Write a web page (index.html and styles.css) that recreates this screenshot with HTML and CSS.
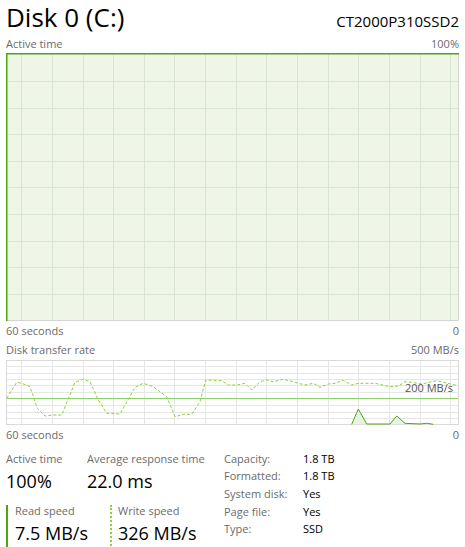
FILE: index.html
```html
<!DOCTYPE html>
<html lang="en">
<head>
    <meta charset="UTF-8">
    <title>Disk 0 (C:)</title>
    <link rel="stylesheet" href="styles.css">
</head>
<body>

<div class="panel">
    <div class="head">
        <h1 class="title">Disk 0 (C:)</h1>
        <div class="model">CT2000P310SSD2</div>
    </div>

    <div class="axis axis-top"><span>Active time</span><span>100%</span></div>
    <!--活动时间图-->
    <svg class="graph" width="453" height="268" viewBox="0 0 453 268">
        <rect x="0" y="0" width="453" height="268" fill="#eff6e8"/>
        <path stroke="#d9e4d1" stroke-width="1" fill="none"
              d="M15.5 0V268M46.5 0V268M77.5 0V268M107.5 0V268M138.5 0V268M168.5 0V268M199.5 0V268M230.5 0V268M260.5 0V268M291.5 0V268M322.5 0V268M352.5 0V268M383.5 0V268M414.5 0V268M444.5 0V268
                 M0 28.5H453M0 55.5H453M0 81.5H453M0 108.5H453M0 134.5H453M0 161.5H453M0 188.5H453M0 214.5H453M0 241.5H453"/>
        <path stroke="#d4d4d4" stroke-width="1" fill="none" d="M452.5 0V267.5H0"/>
        <path stroke="#4da60c" stroke-width="1.5" fill="none" d="M0.75 268V0.75H453"/>
    </svg>
    <div class="axis"><span>60 seconds</span><span>0</span></div>

    <div class="axis axis-tall"><span>Disk transfer rate</span><span>500 MB/s</span></div>
    <!--传输速率图-->
    <div class="rate">
        <svg class="graph" width="453" height="65" viewBox="0 0 453 65">
            <rect x="0.5" y="0.5" width="452" height="64" fill="#fff" stroke="#dadada"/>
            <path stroke="#e6e6e6" stroke-width="1" fill="none"
                  d="M15.5 1V64M46.5 1V64M77.5 1V64M107.5 1V64M138.5 1V64M168.5 1V64M199.5 1V64M230.5 1V64M260.5 1V64M291.5 1V64M322.5 1V64M352.5 1V64M383.5 1V64M414.5 1V64M444.5 1V64
                     M1 6.5H452M1 13.5H452M1 19.5H452M1 25.5H452M1 32.5H452M1 45.5H452M1 52.5H452M1 58.5H452"/>
            <path stroke="#8fd06e" stroke-width="1" d="M1 38.5H452"/>
            <polygon fill="#e9f3e2" points="345.7,64.3 352.3,49 360.7,64 384,64 390.7,56 399,63.3 414,64 420.7,63.3 427.3,64.3"/>
            <polyline fill="none" stroke="#4da60c" stroke-width="1"
                      points="345.7,64.3 352.3,49 360.7,64 384,64 390.7,56 399,63.3 414,64 420.7,63.3 427.3,64.3"/>
            <polyline fill="none" stroke="#8ed13a" stroke-width="1" stroke-dasharray="3 2"
                      points="0.7,38.3 10.7,22.3 15.7,23.3 24,26.7 31.3,48.3 39,56 47.3,55 55.7,55 69,22.3 77.3,19.3 84,21.7 92.3,40 100.7,53.3 114,54 129,27.3 137.3,23.3 147.3,26.7 160.7,36.7 169,56.7 177.3,54.3 185.7,54.3 194,41.7 199.7,20 215.7,20.7 222.3,25 230.7,25 239,23.3 245.7,30 254,21.7 260.7,20 267.3,21.7 277.3,19.3 284,20.7 292.3,23.3 299,25 307.3,23.3 314,27.3 322.3,24 329,23.3 337.3,20.3 345.7,25 352.3,23.3 369,23.3 384,26.7 392.3,26 399,21.7 405.7,22.3 415.7,24 430.7,20.7 437.3,22.3 452,25.7"/>
        </svg>
        <span class="rate-mark">200 MB/s</span>
    </div>
    <div class="axis"><span>60 seconds</span><span>0</span></div>

    <div class="stats">
        <div class="stats-main">
            <div class="stat-row">
                <div class="stat stat-active">
                    <div class="stat-label">Active time</div>
                    <div class="stat-value">100%</div>
                </div>
                <div class="stat">
                    <div class="stat-label">Average response time</div>
                    <div class="stat-value">22.0 ms</div>
                </div>
            </div>
            <div class="stat-row">
                <div class="speed speed-read">
                    <div class="stat-label">Read speed</div>
                    <div class="speed-value">7.5 MB/s</div>
                </div>
                <div class="speed speed-write">
                    <div class="stat-label">Write speed</div>
                    <div class="speed-value">326 MB/s</div>
                </div>
            </div>
        </div>
        <dl class="info">
            <dt>Capacity:</dt><dd>1.8 TB</dd>
            <dt>Formatted:</dt><dd>1.8 TB</dd>
            <dt>System disk:</dt><dd>Yes</dd>
            <dt>Page file:</dt><dd>Yes</dd>
            <dt>Type:</dt><dd>SSD</dd>
        </dl>
    </div>
</div>

</body>
</html>
```

FILE: styles.css
```css
html,body{
    height: 100%;
}
body{
    margin: 0;
    background: #fff;
    color: #000;
    font-family: "Open Sans", "Noto Sans", sans-serif;
    overflow: hidden;
}

.panel{
    width: 465px;
    padding: 0 6px;
    box-sizing: border-box;
}

.head{
    display: flex;
    justify-content: space-between;
    align-items: baseline;
    height: 34px;
}

.title{
    margin: 0;
    font-size: 26px;
    line-height: 34px;
    font-weight: 400;
}

.model{
    font-size: 15px;
}

.axis{
    display: flex;
    justify-content: space-between;
    font-size: 11px;
    line-height: 19px;
    color: #6b6b6b;
}

.axis-tall{
    line-height: 20px;
}

.graph{
    display: block;
}

.rate{
    position: relative;
    height: 65px;
}

.rate-mark{
    position: absolute;
    right: 6px;
    top: 21px;
    font-size: 11px;
    line-height: 14px;
    color: #555;
}

.stats{
    display: flex;
    align-items: flex-start;
    padding-top: 5.5px;
}

.stats-main{
    width: 218px;
}

.stat-row{
    display: flex;
}

.stat-active{
    width: 81px;
}

.stat-label{
    font-size: 11px;
    line-height: 17.8px;
    color: #6b6b6b;
    white-space: nowrap;
}

.stat-value{
    font-size: 18px;
    line-height: 28px;
}

.speed{
    margin-top: 10px;
}

.speed .stat-label{
    line-height: 11px;
}

.speed-value{
    font-size: 18px;
    line-height: 34px;
    white-space: nowrap;
}

.speed-read{
    width: 104px;
    box-sizing: border-box;
    padding-left: 7px;
    border-left: 2px solid #4da60c;
}

.speed-write{
    padding-left: 6px;
    border-left: 2px dotted #8ed13a;
}

.info{
    display: grid;
    grid-template-columns: 79px auto;
    grid-auto-rows: 17.7px;
    margin: 0;
    font-size: 11px;
}

.info dt,
.info dd{
    margin: 0;
    line-height: 17.7px;
}

.info dt{
    color: #6b6b6b;
}
```
